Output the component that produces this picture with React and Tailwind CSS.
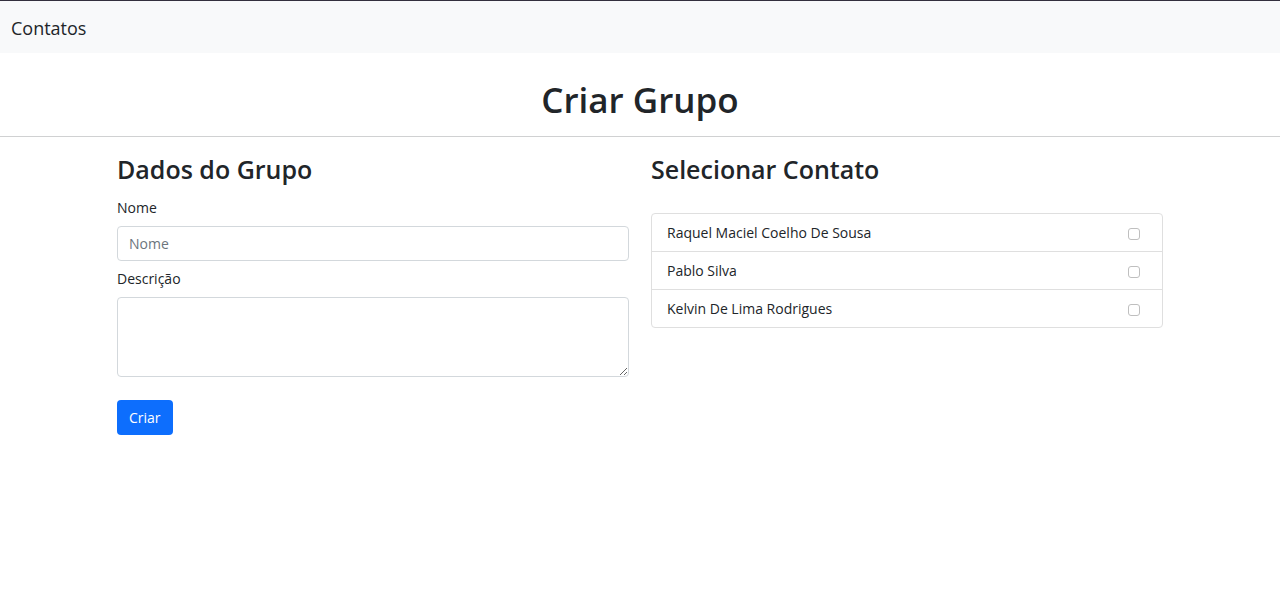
const contacts = ["Raquel Maciel Coelho De Sousa", "Pablo Silva", "Kelvin De Lima Rodrigues"];

export default function App() {
  return (
    <div className="min-h-screen bg-white font-['Segoe_UI','Open_Sans',sans-serif] text-[14px] leading-[22px] text-[#212529]">
      <nav className="border-t border-[#332f3d] bg-[#f8f9fa] px-[11px] pt-[13px] pb-[11px]">
        <a href="#" className="text-lg leading-7 text-[#212529]">Contatos</a>
      </nav>
      <h1 className="border-b border-[#d0d1d2] pt-6 pb-[13px] text-center text-[35px] leading-[46px] font-semibold">Criar Grupo</h1>
      <main className="mx-auto grid max-w-[1046px] grid-cols-2 gap-[22px] pt-4">
        <form>
          <h2 className="mb-3 text-[25px] leading-8 font-semibold">Dados do Grupo</h2>
          <label htmlFor="nome" className="mb-[7px] block">Nome</label>
          <input id="nome" placeholder="Nome" className="mb-[7px] block h-[35px] w-full rounded-[4px] border border-[#d3d8dc] px-[11px] placeholder:text-[#6c757d]" />
          <label htmlFor="descricao" className="mb-[7px] block">Descrição</label>
          <textarea id="descricao" className="block h-20 w-full rounded-[4px] border border-[#d3d8dc] px-[11px] py-[6px]" />
          <button type="button" className="mt-[23px] h-[35px] rounded-[4px] bg-[#0d6efd] px-3 text-white">Criar</button>
        </form>
        <section>
          <h2 className="mb-7 text-[25px] leading-8 font-semibold">Selecionar Contato</h2>
          <ul className="divide-y divide-[#dfdfdf] rounded-[4px] border border-[#dfdfdf]">
            {contacts.map((name, i) => (
              <li key={name} className="flex items-center justify-between pt-[8px] pb-[7px] pr-[22px] pl-[15px]">
                <label htmlFor={`contato-${i}`}>{name}</label>
                <input id={`contato-${i}`} type="checkbox" className="mt-[2px] h-3 w-3 appearance-none rounded-[3px] border border-[#bfbfbf] checked:bg-[#0d6efd]" />
              </li>
            ))}
          </ul>
        </section>
      </main>
    </div>
  );
}
